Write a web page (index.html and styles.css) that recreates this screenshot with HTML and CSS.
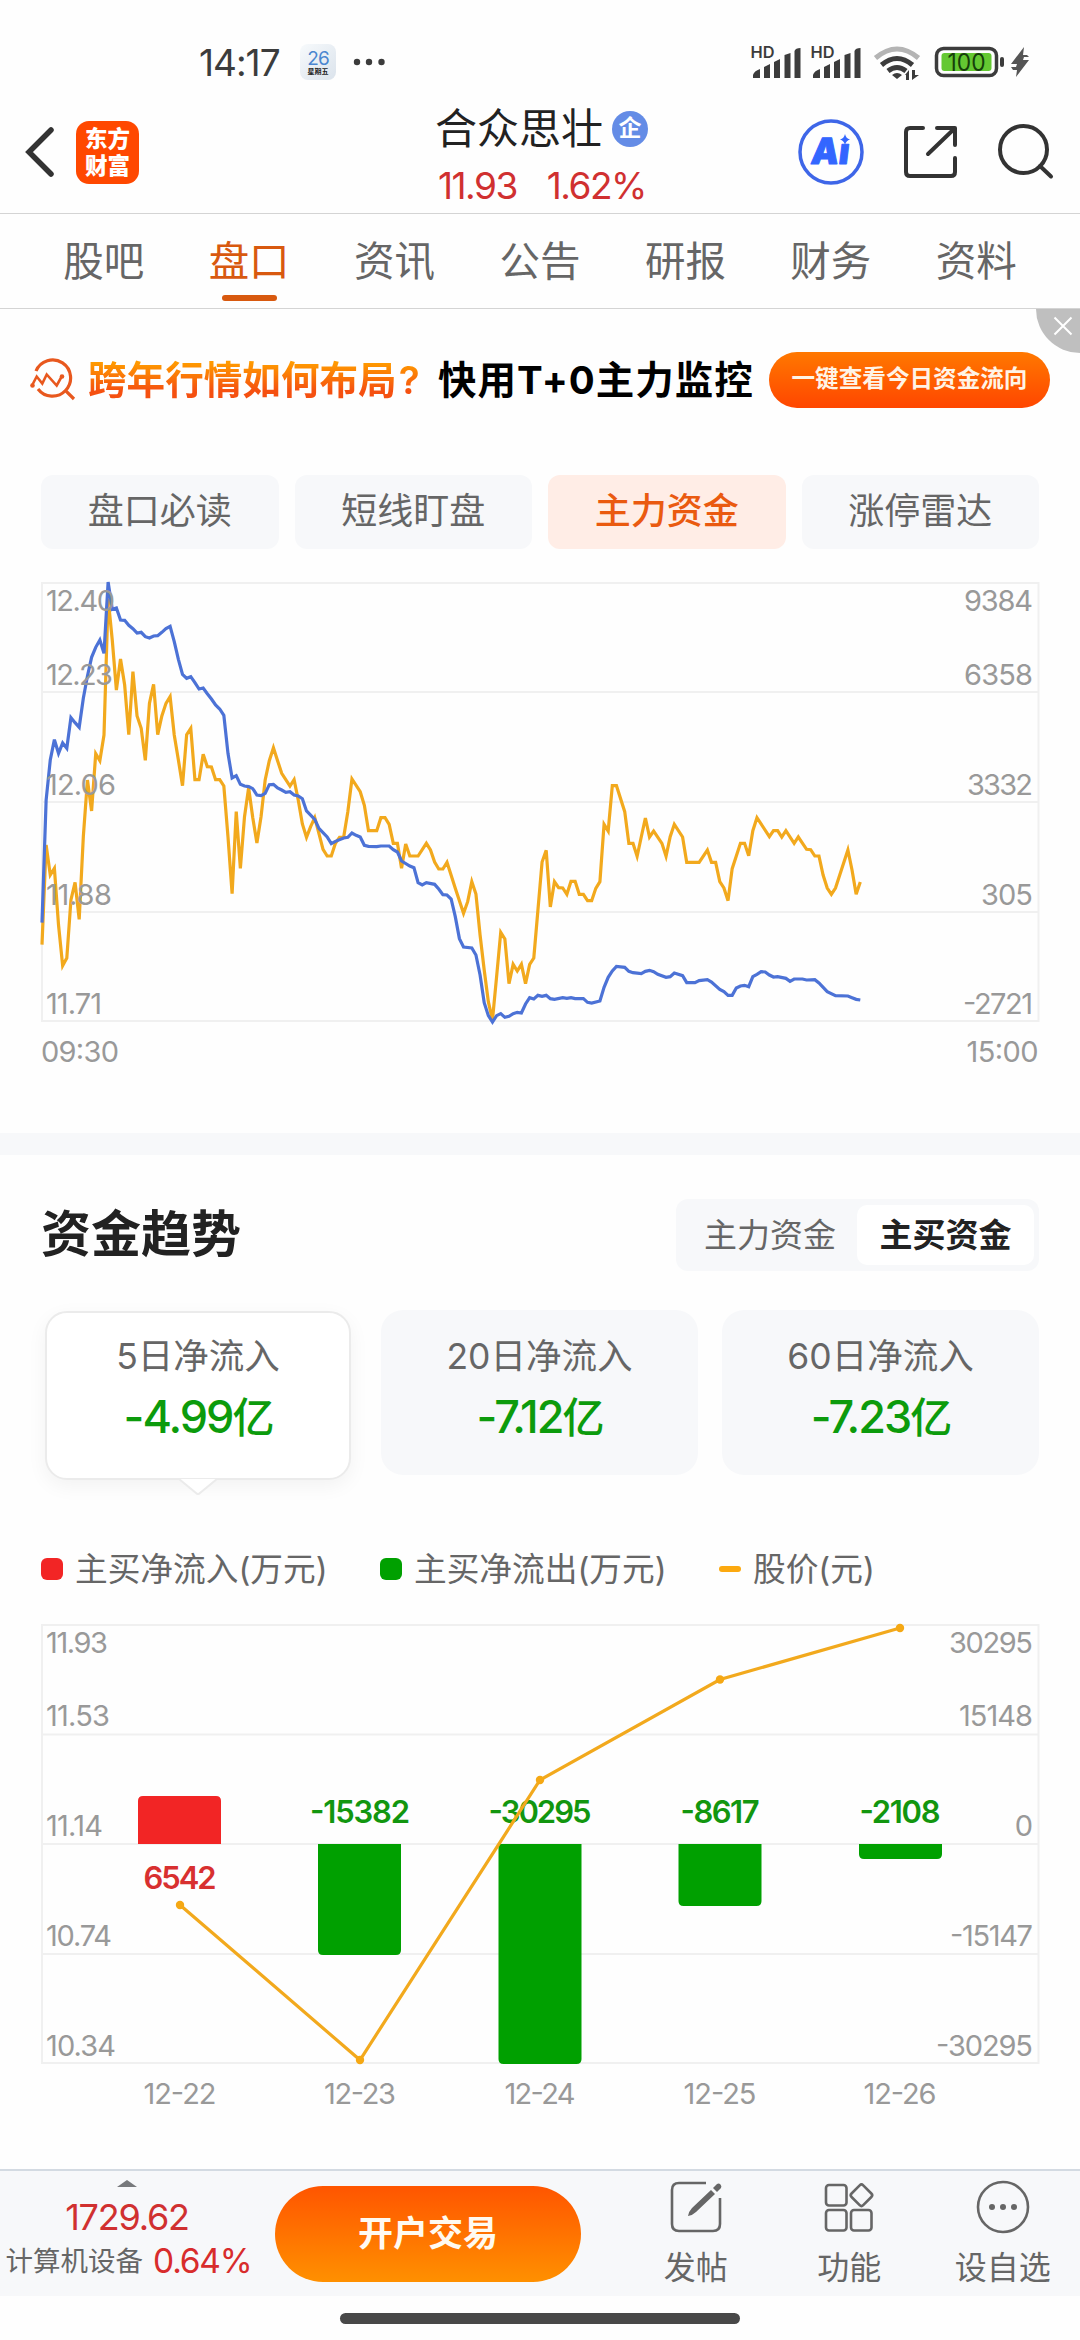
FILE: index.html
```html
<!DOCTYPE html>
<html lang="zh-CN">
<head>
    <meta charset="UTF-8">
    <meta name="viewport" content="width=device-width, initial-scale=1.0">
    <title>合众思壮 - 盘口</title>
    <link rel="stylesheet" href="styles.css">
</head>
<body>
    <div class="status-bar">
        <span class="time">14:17</span>
        <div class="calendar"><b>26</b><i>星期五</i></div>
        <svg class="more" width="32" height="8" viewBox="0 0 32 8"><circle cx="4" cy="4" r="3.2"/><circle cx="16" cy="4" r="3.2"/><circle cx="28.5" cy="4" r="3.2"/></svg>
        <svg class="status-icons" width="284" height="44" viewBox="748 40 284 44">
            <g id="signal">
                <text class="hd" x="749.5" y="58" textLength="24" lengthAdjust="spacingAndGlyphs">HD</text>
                <path d="M752 78v-3q1-4 7-6v9zM763 78V67l6-3v14zM773 78V62l6-3v19zM783.500 78V55l6-2v25zM793.500 78V51q1-3 6-3v30z"/>
            </g>
            <use href="#signal" x="60"/>
            <g fill="none" stroke="#3c3c3c" stroke-width="5">
                <path stroke="#b4b4b4" d="M874.500 58q21.500-18 43 0"/>
                <path d="M880.500 65q15.500-13 31 0"/>
                <path d="M887 71q9-7 18 0"/>
            </g>
            <path d="M891 75q5-4 10 0l-5 4zM904 75l4-5v10h-3v-5zM911 80V70h3v5h4z"/>
            <rect x="935.500" y="48.500" width="60" height="27" rx="7" fill="none" stroke="#3c3c3c" stroke-width="3.500"/>
            <rect x="940.500" y="53" width="50" height="18" rx="3" fill="#64c832"/>
            <rect x="999" y="57" width="4" height="10" rx="2"/>
            <text class="battery-level" x="965.500" y="71" text-anchor="middle" textLength="38" lengthAdjust="spacingAndGlyphs">100</text>
            <path fill="#555" d="M1023 47l-13 17h6l-1 3h-5l2 3h4l-1 7 13-17h-6l1-3h5l-2-2h-4z"/>
        </svg>
    </div>

    <header class="header">
        <svg class="back" width="32" height="56" viewBox="0 0 32 56"><path d="M27 6L5 28l22 22"/></svg>
        <div class="logo"><span>东方</span><span>财富</span></div>
        <div class="stock">
            <div class="stock-name">合众思壮<span class="badge">企</span></div>
            <div class="stock-price"><span>11.93</span><span>1.62%</span></div>
        </div>
        <svg class="header-icons" width="260" height="70" viewBox="796 117 260 70">
            <circle cx="831" cy="152" r="31" fill="none" stroke="#3e66e8" stroke-width="3.500"/>
            <text class="ai" transform="translate(810 163.500) skewX(-7)" textLength="38" lengthAdjust="spacingAndGlyphs">Aı</text>
            <path fill="#3366ff" d="M845 134q1 4.500 5 5.500q-4 1-5 5.500q-1-4.500-5-5.500q4-1 5-5.500z"/>
            <g class="line-icon">
                <path d="M923 128h-13q-4 0-4 4v40q0 4 4 4h41q4 0 4-4v-14M937 128h18v17M953 130l-25 24"/>
                <circle cx="1023.500" cy="149.500" r="23.500"/>
                <path d="M1040 166l11 10.500"/>
            </g>
        </svg>
    </header>

    <nav class="tabs">
        <a>股吧</a>
        <a class="active">盘口</a>
        <a>资讯</a>
        <a>公告</a>
        <a>研报</a>
        <a>财务</a>
        <a>资料</a>
    </nav>

    <div class="banner">
        <svg class="banner-icon" width="46" height="46" viewBox="0 0 46 46">
            <path d="M6 14A18 18 0 1 1 35.500 33.500M8 32A18 18 0 0 0 35.500 33.500L44 42"/>
            <path class="thin" d="M2 28.500l4.700-9 5.600 7 4.400-9 10 11 5-9"/>
            <circle cx="2.500" cy="28.500" r="2.300"/><circle cx="32" cy="19.500" r="2.300"/>
        </svg>
        <span class="banner-question">跨年行情如何布局<em>?</em></span>
        <span class="banner-text">快用T+0主力监控</span>
        <span class="banner-button">一键查看今日资金流向</span>
        <div class="close"><svg width="20" height="20" viewBox="0 0 20 20"><path d="M1.500 1.500l17 17M18.500 1.500l-17 17"/></svg></div>
    </div>

    <div class="sub-tabs">
        <a>盘口必读</a>
        <a>短线盯盘</a>
        <a class="active">主力资金</a>
        <a>涨停雷达</a>
    </div>

    <svg class="chart" width="1080" height="500" viewBox="0 575 1080 500">
        <path class="grid" d="M42 583H1038.500V1021H42ZM42 692H1038.500M42 802H1038.500M42 912H1038.500"/>
        <!-- one x unit per trading minute, three y units per pixel -->
        <svg class="series" x="42" y="583" width="996" height="438" viewBox="0 39 241 1314" preserveAspectRatio="none">
            <polyline class="price-line" points="0,1124 1,825 2,915 3,895 4,1065 5,1187 6,1164 7,990 8,937 9,1048 10,800 11,630 12,723 13,551 14,572 15,495 16,85 17,210 18,360 19,267 20,345 21,494 22,305 23,438 24,475 25,571 26,400 27,343 28,494 29,438 30,400 31,380 32,495 33,570 34,647 35,494 36,475 37,629 38,629 39,553 40,590 41,591 42,629 43,629 44,648 45,800 46,971 47,725 48,895 49,740 50,653 51,743 52,819 53,740 54,630 55,572 56,533 57,572 58,610 60,648 61,629 62,690 63,762 64,802 65,770 66,743 67,790 68,838 69,858 70,858 71,820 72,802 73,801 74,725 75,627 77,665 78,706 79,782 81,782 82,743 83,743 84,763 85,820 86,820 87,895 88,822 89,858 91,858 93,820 94,840 95,876 96,897 97,897 98,877 100,955 102,1030 103,995 104,935 105,972 106,1095 107,1200 108,1295 109,1350 110,1220 111,1087 112,1107 113,1241 114,1183 115,1203 116,1183 117,1241 118,1183 119,1164 120,1020 121,876 122,841 123,1011 124,935 125,953 126,954 127,973 128,934 129,934 130,973 131,973 132,992 133,992 134,955 135,935 136,763 137,783 138,647 139,647 141,725 142,820 143,820 144,859 145,801 146,744 147,801 148,783 150,820 151,859 152,800 153,763 155,801 156,877 159,877 161,840 162,877 163,877 164,935 165,954 166,992 167,896 169,820 170,820 171,857 172,782 173,743 176,800 177,782 178,782 179,801 180,782 182,820 183,801 185,838 186,839 187,858 188,858 189,915 190,954 191,973 192,954 195,840 196,900 197,973 198,936"/>
            <polyline class="fund-line" points="0,1058 1,690 2,570 3,509 4,550 5,519 6,535 7,443 8,458 9,472 10,385 11,318 12,262 13,232 14,210 15,250 16,36 17,118 18,114 19,150 20,151 21,166 22,176 23,189 24,187 25,200 26,204 27,198 28,197 29,187 30,176 31,169 32,215 33,268 34,313 35,325 36,320 37,338 38,357 39,354 40,371 41,387 42,405 43,417 44,436 45,550 46,624 47,617 48,643 49,648 50,650 51,656 52,675 53,677 54,670 55,644 56,643 57,654 58,660 59,667 60,665 61,675 62,678 63,686 64,723 66,748 67,775 69,801 70,821 71,814 73,804 74,802 75,789 76,796 77,801 78,826 79,829 81,830 82,828 84,828 85,839 86,846 87,873 89,888 90,893 91,938 92,945 93,938 95,943 96,957 97,974 98,975 99,987 100,1040 101,1106 102,1131 104,1134 105,1155 106,1215 107,1298 108,1337 109,1356 110,1337 111,1331 112,1342 113,1339 114,1331 115,1327 116,1329 117,1302 118,1283 119,1287 120,1276 121,1279 122,1276 123,1286 124,1288 126,1283 127,1285 128,1283 129,1286 131,1286 132,1297 133,1299 135,1293 136,1252 137,1222 138,1203 139,1189 141,1192 142,1204 143,1208 145,1211 146,1204 147,1201 148,1205 149,1213 151,1222 152,1220 153,1209 155,1217 156,1238 158,1238 159,1232 161,1229 162,1236 164,1258 165,1265 166,1276 167,1276 168,1254 169,1248 170,1246 171,1250 172,1220 173,1213 174,1205 175,1206 176,1215 177,1221 178,1220 180,1225 181,1234 182,1227 184,1227 185,1230 187,1229 188,1239 190,1265 192,1277 195,1278 196,1283 197,1288 198,1290"/>
        </svg>
        <g class="axis">
            <text x="46" y="611" textLength="69">12.40</text>
            <text x="46" y="684.500" textLength="67">12.23</text>
            <text x="46" y="794.500" textLength="70">12.06</text>
            <text x="46" y="904.500" textLength="66">11.88</text>
            <text x="46" y="1014" textLength="56">11.71</text>
            <text x="41" y="1062" textLength="78">09:30</text>
        </g>
        <g class="axis right">
            <text x="1033" y="611" textLength="69">9384</text>
            <text x="1033" y="684.500" textLength="69">6358</text>
            <text x="1033" y="794.500" textLength="66">3332</text>
            <text x="1033" y="904.500" textLength="52">305</text>
            <text x="1033" y="1014" textLength="70">-2721</text>
            <text x="1038.500" y="1062" textLength="72">15:00</text>
        </g>
    </svg>

    <section class="trend">
        <div class="trend-head">
            <h2>资金趋势</h2>
            <div class="switch">
                <span>主力资金</span>
                <span class="active">主买资金</span>
            </div>
        </div>

        <div class="cards">
            <div class="card selected">
                <p>5日净流入</p>
                <strong>-4.99<b>亿</b></strong>
                <svg class="pointer" width="38" height="17" viewBox="0 0 38 17"><path d="M0 0L17 14q2 2 4 0L38 0"/></svg>
            </div>
            <div class="card">
                <p>20日净流入</p>
                <strong>-7.12<b>亿</b></strong>
            </div>
            <div class="card">
                <p>60日净流入</p>
                <strong>-7.23<b>亿</b></strong>
            </div>
        </div>

        <div class="legend">
            <span class="in">主买净流入(万元)</span>
            <span class="out">主买净流出(万元)</span>
            <span class="price">股价(元)</span>
        </div>

        <svg class="chart" width="1080" height="500" viewBox="0 1615 1080 500">
            <path class="grid" d="M42 1625H1038.500V2063H42ZM42 1734.500H1038.500M42 1844H1038.500M42 1954H1038.500"/>
            <path fill="#f22525" d="M138 1844V1801q0-5 5-5h73q5 0 5 5v43z"/>
            <g fill="#00a000">
                <path d="M318 1844h83v106q0 5-5 5h-73q-5 0-5-5z"/>
                <path d="M498.500 1844h83v215q0 5-5 5h-73q-5 0-5-5z"/>
                <path d="M678.500 1844h83v57q0 5-5 5h-73q-5 0-5-5z"/>
                <path d="M859 1844h83v10q0 5-5 5h-73q-5 0-5-5z"/>
            </g>
            <g class="bar-value">
                <text class="up" x="180" y="1889" textLength="73">6542</text>
                <text x="360" y="1822.500" textLength="100">-15382</text>
                <text x="540" y="1822.500" textLength="103">-30295</text>
                <text x="720" y="1822.500" textLength="79">-8617</text>
                <text x="900" y="1822.500" textLength="81">-2108</text>
            </g>
            <polyline class="price-line" points="180,1905 360,2060 540,1780 720,1679.500 900,1628"/>
            <g fill="#f5a814">
                <circle cx="180" cy="1905" r="4.200"/>
                <circle cx="360" cy="2060" r="4.200"/>
                <circle cx="540" cy="1780" r="4.200"/>
                <circle cx="720" cy="1679.500" r="4.200"/>
                <circle cx="900" cy="1628" r="4.200"/>
            </g>
            <g class="axis">
                <text x="46" y="1653" textLength="62">11.93</text>
                <text x="46" y="1726" textLength="64">11.53</text>
                <text x="46" y="1836" textLength="57">11.14</text>
                <text x="46" y="1946" textLength="66">10.74</text>
                <text x="46" y="2056" textLength="70">10.34</text>
            </g>
            <g class="axis right">
                <text x="1033" y="1653" textLength="84">30295</text>
                <text x="1033" y="1726" textLength="74">15148</text>
                <text x="1033" y="1836">0</text>
                <text x="1033" y="1946" textLength="83">-15147</text>
                <text x="1033" y="2056" textLength="97">-30295</text>
            </g>
            <g class="axis center">
                <text x="180" y="2104" textLength="73">12-22</text>
                <text x="360" y="2104" textLength="72">12-23</text>
                <text x="540" y="2104" textLength="71">12-24</text>
                <text x="720" y="2104" textLength="73">12-25</text>
                <text x="900" y="2104" textLength="73">12-26</text>
            </g>
        </svg>
    </section>

    <footer class="bottom-bar">
        <div class="index">
            <svg width="20" height="7" viewBox="0 0 20 7"><path fill="#77797c" d="M0 7L10 0l10 7z"/></svg>
            <div class="index-value">1729.62</div>
            <div class="index-name">计算机设备<span>0.64%</span></div>
        </div>
        <a class="trade">开户交易</a>
        <div class="actions">
            <a>
                <svg width="54" height="54" viewBox="0 0 54 54">
                    <path d="M37 3H10Q3 3 3 10v34q0 7 7 7h34q7 0 7-7V18"/>
                    <path class="solid" d="M19 36q1-5 4-8l19-18 4 4-19 18q-3 3-8 4zM44 8l4-4q2-1 3.500 0.500t0.500 3.500l-4 4z"/>
                </svg>
                发帖
            </a>
            <a>
                <svg width="54" height="54" viewBox="0 0 54 54">
                    <rect x="4" y="5" width="20.500" height="20.500" rx="3"/>
                    <rect x="4" y="30" width="20.500" height="20.500" rx="3"/>
                    <rect x="29" y="30" width="20.500" height="20.500" rx="3"/>
                    <rect x="31.200" y="7" width="16.500" height="16.500" rx="2.500" transform="rotate(45 39.450 15.250)"/>
                </svg>
                功能
            </a>
            <a>
                <svg width="54" height="54" viewBox="0 0 54 54">
                    <circle cx="27" cy="27" r="25"/>
                    <g class="solid"><circle cx="16" cy="27" r="3"/><circle cx="27" cy="27" r="3"/><circle cx="38" cy="27" r="3"/></g>
                </svg>
                设自选
            </a>
        </div>
    </footer>
    <div class="home-bar"></div>
</body>
</html>
```
FILE: styles.css
```css
* {
    box-sizing: border-box;
}
body {
    font-family: Inter, "Noto Sans CJK SC", sans-serif;
    margin: 0;
    width: 1080px;
    height: 2340px;
    overflow: hidden;
    background-color: #fefefe;
    color: #666;
}
svg {
    display: block;
    flex: none;
}

/* status bar */
.status-bar {
    display: flex;
    align-items: center;
    height: 107px;
    padding: 17px 47px 0 199px;
}
.time {
    width: 101px;
    font-size: 37px;
    letter-spacing: -1px;
    color: #3c3c3c;
}
.calendar {
    display: flex;
    flex-direction: column;
    align-items: center;
    width: 36px;
    height: 36px;
    padding-top: 5px;
    border-radius: 8px;
    background: linear-gradient(135deg, #f7fafc, #dbe3ec);
}
.calendar b {
    font-size: 19px;
    font-weight: 400;
    line-height: 19px;
    letter-spacing: -1px;
    color: #4a86d0;
}
.calendar i {
    font-size: 7px;
    font-style: normal;
    font-weight: 700;
    line-height: 8px;
    color: #222;
    white-space: nowrap;
}
.more {
    margin-left: 17px;
    fill: #3c3c3c;
}
.status-icons {
    margin-left: auto;
    fill: #3c3c3c;
}
.hd {
    font-size: 16px;
    font-weight: 600;
}
.battery-level {
    font-size: 24px;
    fill: #16400a;
}

/* header */
.header {
    display: grid;
    grid-template-columns: 76px 63px 1fr 260px;
    align-items: center;
    height: 107px;
    padding-right: 24px;
    border-bottom: 1px solid #d4d4d4;
}
.back {
    margin: -17px 0 0 24px;
    fill: none;
    stroke: #333;
    stroke-width: 5.500;
    stroke-linecap: round;
}
.logo {
    display: flex;
    flex-direction: column;
    align-items: center;
    justify-content: center;
    height: 63px;
    margin-top: -16px;
    border-radius: 13px;
    background-color: #ff4800;
    color: white;
    font-size: 22.500px;
    font-weight: 900;
    line-height: 27px;
}
.stock {
    height: 106px;
    padding-left: 296px;
}
.stock-name {
    display: flex;
    align-items: center;
    height: 44px;
    font-size: 42px;
    line-height: 44px;
    color: #222;
    white-space: nowrap;
}
.badge {
    width: 36px;
    height: 36px;
    margin-left: 9px;
    border-radius: 50%;
    background-color: #648ce6;
    color: white;
    font-size: 23px;
    font-weight: 700;
    line-height: 34px;
    text-align: center;
}
.stock-price {
    display: flex;
    gap: 30px;
    padding: 12px 0 0 3px;
    font-size: 37px;
    line-height: 46px;
    letter-spacing: -1.500px;
    color: #d03030;
}
.header-icons {
    margin-top: -17px;
}
.ai {
    font-size: 36px;
    font-weight: 900;
    fill: #3366ff;
    stroke: #3366ff;
    stroke-width: 1;
    stroke-linejoin: round;
}
.line-icon {
    fill: none;
    stroke: #333;
    stroke-width: 4;
    stroke-linecap: round;
    stroke-linejoin: round;
}

/* tabs */
.tabs {
    display: flex;
    height: 95px;
    padding: 0 31px;
    border-bottom: 1px solid #d4d4d4;
}
.tabs a {
    display: flex;
    flex-direction: column;
    align-items: center;
    flex: 1;
    padding-top: 18px;
    font-size: 40.500px;
    line-height: 60px;
}
.tabs .active {
    color: #d8590f;
}
.tabs .active::after {
    content: "";
    width: 55px;
    height: 6px;
    margin-top: 3px;
    border-radius: 3px;
    background-color: #d8590f;
}

/* promo banner */
.banner {
    position: relative;
    display: flex;
    align-items: center;
    height: 142px;
    padding-left: 30px;
    white-space: nowrap;
}
.banner-icon {
    fill: #e8581e;
}
.banner-icon path {
    fill: none;
    stroke: #e8581e;
    stroke-width: 3.200;
}
.banner-icon .thin {
    stroke-width: 2.600;
}
.banner-question {
    width: 349px;
    margin-top: -6px;
    padding-left: 12px;
    font-size: 38.600px;
    font-weight: 700;
    background: linear-gradient(#ff9a00 25%, #f55010 75%);
    -webkit-background-clip: text;
    background-clip: text;
    color: transparent;
}
.banner-question em {
    margin-left: 2px;
    font-style: normal;
    font-weight: 600;
}
.banner-text {
    width: 331px;
    margin-top: -6px;
    padding-left: 13px;
    font-size: 38.500px;
    font-weight: 700;
    letter-spacing: 1px;
    color: #000;
}
.banner-button {
    width: 281px;
    height: 56px;
    margin-left: 13px;
    border-radius: 28px;
    background: linear-gradient(#ff7800, #ff4600);
    color: #fff4e6;
    font-size: 23.600px;
    font-weight: 700;
    line-height: 53px;
    text-align: center;
}
.close {
    position: absolute;
    top: 0;
    right: 0;
    width: 44px;
    height: 44px;
    padding: 7px 0 0 17px;
    border-bottom-left-radius: 44px;
    background-color: #bfbfbf;
}
.close path {
    stroke: white;
    stroke-width: 2;
}

.sub-tabs {
    display: grid;
    grid-template-columns: repeat(4, 1fr);
    gap: 16px;
    margin-top: 24px;
    padding: 0 41px;
}
.sub-tabs a {
    height: 74px;
    border-radius: 12px;
    background-color: #f7f8fa;
    font-size: 36px;
    line-height: 73px;
    text-align: center;
}
.sub-tabs .active {
    background-color: #ffede6;
    color: #ea5a10;
    font-weight: 500;
}

/* charts */
.chart {
    margin-top: 26px;
}
.grid {
    fill: none;
    stroke: #f0f0f0;
    stroke-width: 2;
}
.series {
    overflow: visible;
}
.series polyline {
    vector-effect: non-scaling-stroke;
}
.price-line {
    fill: none;
    stroke: #f2a91d;
    stroke-width: 3.200;
}
.fund-line {
    fill: none;
    stroke: #4c72d6;
    stroke-width: 3.200;
}
.axis {
    font-size: 29px;
    fill: #999;
}
.right {
    text-anchor: end;
}
.center {
    text-anchor: middle;
}
.bar-value {
    font-size: 31px;
    font-weight: 600;
    text-anchor: middle;
    fill: #12960f;
}
.bar-value .up {
    fill: #d83030;
}

/* fund trend */
.trend {
    margin-top: 58px;
    border-top: 22px solid #f7f8fa;
}
.trend-head {
    display: flex;
    align-items: center;
    justify-content: space-between;
    height: 72px;
    margin: 44px 41px 0;
}
.trend-head h2 {
    margin: -3px 0 0;
    font-size: 50px;
    line-height: 70px;
    color: #222;
}
.switch {
    display: grid;
    grid-template-columns: 178px 177px;
    width: 363px;
    height: 72px;
    padding: 6px 5px 6px 3px;
    border-radius: 12px;
    background-color: #f7f8fa;
    font-size: 33px;
    line-height: 60px;
    text-align: center;
}
.switch span {
    padding-left: 4px;
    border-radius: 10px;
}
.switch .active {
    padding-left: 0;
    background-color: white;
    color: #222;
    font-weight: 600;
}
.cards {
    display: flex;
    gap: 24px;
    height: 200px;
    margin-top: 39px;
    padding-left: 45px;
}
.card {
    width: 317px;
    height: 165px;
    border-radius: 22px;
    background-color: #f7f8fa;
    text-align: center;
}
.card p {
    margin: 22px 0 0;
    font-size: 35.500px;
    line-height: 50px;
}
.card strong {
    display: block;
    margin-top: 5px;
    font-size: 45px;
    font-weight: 500;
    line-height: 60px;
    letter-spacing: -2px;
    color: #0c9b0c;
}
.card b {
    font-size: 42px;
    font-weight: 500;
}
.selected {
    display: flex;
    flex-direction: column;
    align-items: center;
    width: 306px;
    height: 169px;
    margin: 1px 6px 0 0;
    border: 2px solid #ebebeb;
    background-color: white;
    box-shadow: 0 6px 20px rgba(0, 0, 0, 0.05);
}
.selected p {
    margin-top: 19px;
}
.pointer {
    margin-top: 31px;
    fill: white;
    stroke: #ebebeb;
    stroke-width: 2;
}
.legend {
    display: flex;
    height: 50px;
    margin-top: 34px;
    padding-left: 41px;
    font-size: 32.700px;
    line-height: 50px;
}
.legend span {
    display: flex;
    align-items: center;
    width: 339px;
    white-space: nowrap;
}
.legend span::before {
    content: "";
    width: 22px;
    height: 22px;
    margin-right: 12px;
    border-radius: 6px;
    background-color: #f22525;
}
.legend .out::before {
    background-color: #00a000;
}
.legend .price::before {
    height: 6px;
    border-radius: 3px;
    background-color: #fca90f;
}
.trend .chart {
    margin-top: 21px;
}

/* bottom bar */
.bottom-bar {
    display: flex;
    height: 127px;
    margin-top: 54px;
    border-top: 2px solid #d3dae2;
    background-color: #f7f8fa;
}
.index {
    display: flex;
    flex-direction: column;
    align-items: center;
    width: 254px;
    padding-top: 9px;
    white-space: nowrap;
}
.index-value {
    margin-top: 8px;
    font-size: 36px;
    line-height: 44px;
    letter-spacing: -1.200px;
    color: #d03030;
}
.index-name {
    display: flex;
    align-items: center;
    margin-left: 3px;
    line-height: 44px;
    font-size: 27.500px;
}
.index-name span {
    margin-left: 10px;
    font-size: 33.500px;
    letter-spacing: -1.200px;
    color: #d82c2c;
}
.trade {
    width: 306px;
    height: 96px;
    margin: 15px 0 0 21px;
    border-radius: 48px;
    background: linear-gradient(#ff5500, #ff9000);
    color: #fffaf0;
    font-size: 35px;
    font-weight: 600;
    line-height: 94px;
    text-align: center;
}
.actions {
    display: grid;
    grid-template-columns: repeat(3, 153.500px);
    margin-left: 38px;
}
.actions a {
    display: flex;
    flex-direction: column;
    align-items: center;
    padding-top: 9px;
    font-size: 32px;
    line-height: 67px;
}
.actions svg {
    fill: none;
    stroke: #666;
    stroke-width: 2.600;
}
.actions .solid {
    fill: #666;
    stroke: none;
}
.home-bar {
    width: 400px;
    height: 11px;
    margin: 17px auto 0;
    border-radius: 6px;
    background-color: #484848;
}
```
